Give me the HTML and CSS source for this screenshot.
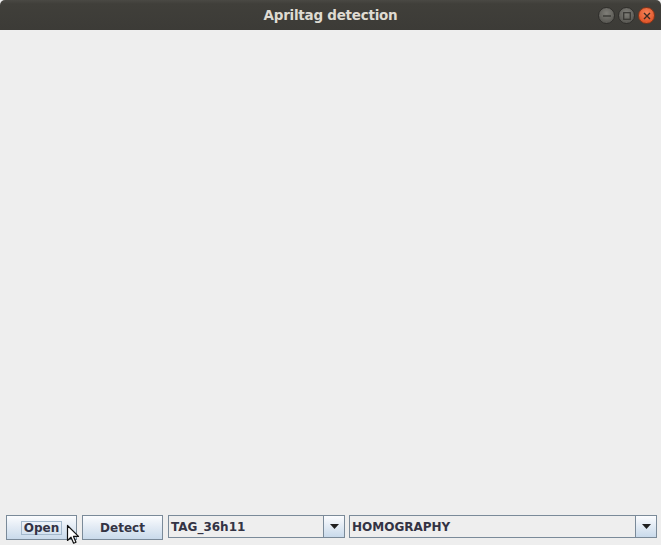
FILE: index.html
```html
<!DOCTYPE html>
<html>
<head>
<meta charset="utf-8">
<link rel="stylesheet" href="styles.css">
</head>
<body>
<div class="window">
  <div class="titlebar">
    <div class="title">Apriltag detection</div>
    <div class="wm-buttons">
      <span class="wm wm-min"><svg width="8" height="8" viewBox="0 0 8 8"><rect x="0" y="3.3" width="8" height="1.4" fill="#3a3935"/></svg></span>
      <span class="wm wm-max"><svg width="8" height="8" viewBox="0 0 8 8"><rect x="0.7" y="0.7" width="6.6" height="6.6" fill="none" stroke="#3a3935" stroke-width="1.3"/></svg></span>
      <span class="wm wm-close"><svg width="8" height="8" viewBox="0 0 8 8"><path d="M1 1L7 7M7 1L1 7" stroke="#3a2a22" stroke-width="1.4"/></svg></span>
    </div>
  </div>
  <div class="content"></div>
  <div class="toolbar">
    <button class="btn btn-open"><span class="focus">Open</span></button>
    <button class="btn btn-detect">Detect</button>
    <div class="combo combo-family">
      <span class="combo-text">TAG_36h11</span>
      <span class="combo-arrow"><svg width="9" height="5" viewBox="0 0 9 5"><path d="M0 0H9L4.5 5Z" fill="#1f1f1f"/></svg></span>
    </div>
    <div class="combo combo-mode">
      <span class="combo-text">HOMOGRAPHY</span>
      <span class="combo-arrow"><svg width="9" height="5" viewBox="0 0 9 5"><path d="M0 0H9L4.5 5Z" fill="#1f1f1f"/></svg></span>
    </div>
  </div>
  <svg class="cursor" width="14" height="21" viewBox="0 0 14 21">
    <path d="M1.5 1.5V16.5L5 13.2L7.6 19.2L10 18.2L7.5 12.4H12.5Z" fill="#ffffff" stroke="#111" stroke-width="1.2" stroke-linejoin="round"/>
  </svg>
</div>
</body>
</html>
```

FILE: styles.css
```css
html, body {
  margin: 0;
  padding: 0;
  background: #eeeeee;
}
.window {
  position: relative;
  width: 661px;
  height: 545px;
  display: flex;
  flex-direction: column;
  background: #eeeeee;
  overflow: hidden;
}
.titlebar {
  height: 30px;
  flex: 0 0 30px;
  background: linear-gradient(#4a4944 0px, #403f3a 4px, #3c3b37 30px);
  border-radius: 5px 5px 0 0;
  position: relative;
  display: flex;
  align-items: center;
  justify-content: center;
}
.title {
  font-family: "DejaVu Sans", sans-serif;
  font-weight: bold;
  font-size: 13.5px;
  color: #dfdbd2;
  letter-spacing: -0.25px;
}
.wm-buttons {
  position: absolute;
  right: 6px;
  top: 7px;
  display: flex;
  gap: 3px;
}
.wm {
  width: 17px;
  height: 17px;
  border-radius: 50%;
  display: flex;
  align-items: center;
  justify-content: center;
  box-sizing: border-box;
}
.wm-min, .wm-max {
  background: radial-gradient(circle at 50% 35%, #7f7e78, #5c5b56 70%);
  border: 1px solid #2f2e2b;
}
.wm-close {
  background: radial-gradient(circle at 50% 35%, #f5845a, #e2582c 70%);
  border: 1px solid #8a3518;
}
.content {
  flex: 1;
}
.toolbar {
  display: flex;
  align-items: flex-start;
  padding: 0 4px 5px 6px;
  height: 30px;
  box-sizing: border-box;
  flex: 0 0 30px;
}
.btn {
  height: 25px;
  box-sizing: border-box;
  border: 1px solid #7a8a99;
  background: linear-gradient(#fbfcfe 0%, #e4ecf5 45%, #c9daeb 100%);
  font-family: "DejaVu Sans", sans-serif;
  font-weight: bold;
  font-size: 12px;
  color: #333344;
  padding: 0;
  display: flex;
  align-items: center;
  justify-content: center;
  margin: 0;
}
.btn-open {
  width: 71px;
  margin-right: 5px;
}
.focus {
  border: 1px solid #a3b8cc;
  padding: 0 2px;
  height: 14px;
  box-sizing: border-box;
  display: inline-flex;
  align-items: center;
}
.btn-detect {
  width: 81px;
  margin-right: 5px;
}
.combo {
  height: 23px;
  box-sizing: border-box;
  border: 1px solid #7a8a99;
  background: #eeeeee;
  display: flex;
  align-items: stretch;
}
.combo-family {
  width: 177px;
  margin-right: 4px;
}
.combo-mode {
  width: 308px;
}
.combo-text {
  flex: 1;
  font-family: "DejaVu Sans", sans-serif;
  font-weight: bold;
  font-size: 12px;
  color: #333344;
  padding-left: 2px;
  display: flex;
  align-items: center;
}
.combo-arrow {
  width: 20px;
  border-left: 1px solid #7a8a99;
  background: linear-gradient(#fbfcfe 0%, #e4ecf5 45%, #c9daeb 100%);
  display: flex;
  align-items: center;
  justify-content: center;
}
.cursor {
  position: absolute;
  left: 66px;
  top: 524px;
}
```
